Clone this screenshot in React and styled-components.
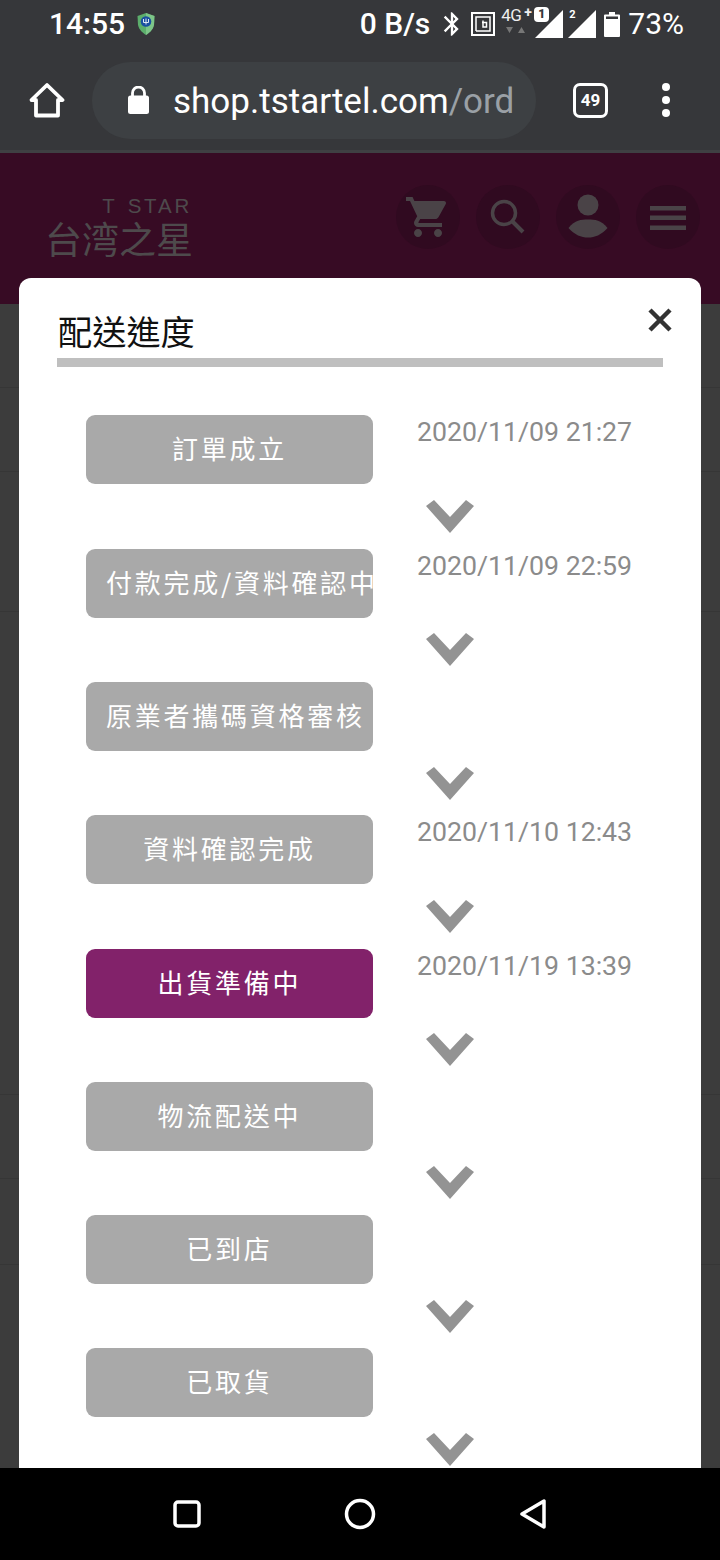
import React from "react";
import styled, { createGlobalStyle } from "styled-components";

const Global = createGlobalStyle`
  html, body { margin: 0; padding: 0; background: #000; }
  * { box-sizing: border-box; }
`;

const Phone = styled.div`
  position: relative;
  width: 720px;
  height: 1560px;
  overflow: hidden;
  display: flex;
  flex-direction: column;
  background: #3c3c3c;
  font-family: Roboto, "Noto Sans CJK TC", sans-serif;
`;

const Chrome = styled.div`
  height: 153px;
  flex: none;
  background: #36373a;
  border-bottom: 3px solid #3f4043;
  color: #fff;
`;

const StatusBar = styled.div`
  height: 50px;
  display: flex;
  align-items: center;
  padding: 0 36px 2px 49px;
  font-size: 30px;
  line-height: 1;
`;

const Clock = styled.span`
  font-weight: 500;
  margin-right: 11px;
`;

const Spacer = styled.div`
  flex: 1;
`;

const StatusIcons = styled.div`
  display: flex;
  align-items: center;
`;

const Speed = styled.span`
  font-weight: 500;
  margin-right: 8px;
  font-size: 30px;
`;

const Network = styled.div`
  position: relative;
  width: 34px;
  height: 36px;
  margin-left: 6px;
  font-size: 17px;
  font-weight: 400;
  color: #eee;
`;

const NetLabel = styled.span`
  position: absolute;
  left: 0;
  top: 1px;
  letter-spacing: -0.5px;
`;

const NetPlus = styled.span`
  position: absolute;
  left: 23px;
  top: -1px;
  font-size: 14px;
  font-weight: 700;
`;

const NetArrows = styled.svg`
  position: absolute;
  left: 5px;
  top: 21px;
`;

const Signal = styled.div`
  position: relative;
  width: 28px;
  height: 28px;
  margin-left: ${(p) => p.$gap}px;
`;

const SimBadge = styled.span`
  position: absolute;
  left: -1px;
  top: -3px;
  width: 15px;
  height: 15px;
  border-radius: 4px;
  background: #fff;
  color: #36373a;
  font-size: 12px;
  font-weight: 900;
  line-height: 15px;
  text-align: center;
  box-shadow: 0 0 0 1px #36373a;
`;

const SimLabel = styled.span`
  position: absolute;
  left: 1px;
  top: -1px;
  font-size: 11px;
  font-weight: 700;
  color: #fff;
`;

const Percent = styled.span`
  margin-left: 8px;
`;

const Toolbar = styled.div`
  height: 100px;
  display: flex;
  align-items: center;
  padding-left: 29px;
`;

const UrlPill = styled.div`
  width: 444px;
  height: 77px;
  margin-left: 27px;
  margin-right: 37px;
  border-radius: 39px;
  background: #3d4043;
  display: flex;
  align-items: center;
  padding: 0 20px 0 36px;
  overflow: hidden;
`;

const UrlText = styled.div`
  margin-left: 24px;
  padding-top: 4px;
  font-size: 35px;
  line-height: 40px;
  white-space: nowrap;
  overflow: hidden;
  color: #fff;
`;

const UrlPath = styled.span`
  color: #9aa0a6;
`;

const TabCount = styled.div`
  width: 35px;
  height: 35px;
  border: 3.5px solid #fff;
  border-radius: 7px;
  display: flex;
  align-items: center;
  justify-content: center;
  font-size: 17px;
  font-weight: 700;
  margin-right: 53px;
`;

const SiteHeader = styled.div`
  height: 151px;
  flex: none;
  background: #370b24;
  display: flex;
  padding: 41px 20px 0 45px;
`;

const Logo = styled.div`
  width: 147px;
  display: flex;
  flex-direction: column;
  color: #4e4a4c;
`;

const LogoLatin = styled.div`
  font-family: "Liberation Sans", sans-serif;
  font-size: 20.5px;
  line-height: 24px;
  letter-spacing: 2.8px;
  word-spacing: 2px;
  text-align: right;
  white-space: pre;
`;

const LogoCjk = styled.div`
  font-family: "Noto Sans CJK SC", sans-serif;
  font-size: 37px;
  line-height: 41px;
  white-space: nowrap;
`;

const HeaderActions = styled.div`
  margin-left: auto;
  margin-top: -9px;
  display: flex;
  gap: 16px;
  height: 64px;
`;

const RoundAction = styled.div`
  width: 64px;
  height: 64px;
  border-radius: 50%;
  background: #300a20;
  display: flex;
  align-items: center;
  justify-content: center;
`;

const Backdrop = styled.div`
  flex: 1;
  display: flex;
  flex-direction: column;
`;

const BackdropRow = styled.div`
  height: ${(p) => p.$h}px;
  flex: none;
  border-bottom: 1px solid #363636;
`;

const NavBar = styled.div`
  position: relative;
  z-index: 3;
  height: 92px;
  flex: none;
  background: #000;
  display: flex;
  align-items: center;
  justify-content: center;
  gap: 143px;
  padding-bottom: 1px;
`;

const Modal = styled.div`
  position: absolute;
  z-index: 2;
  left: 19px;
  top: 278px;
  width: 682px;
  height: 1190px;
  background: #fff;
  border-radius: 12px 12px 0 0;
  overflow: hidden;
  padding: 33px 38px 0;
`;

const CloseButton = styled.svg`
  position: absolute;
  right: 29px;
  top: 30px;
`;

const Title = styled.h2`
  margin: 0 0 0 1px;
  height: 47px;
  font-family: "Noto Sans CJK TC", sans-serif;
  font-weight: 400;
  font-size: 34.2px;
  line-height: 38px;
  color: #111;
`;

const TitleRule = styled.div`
  height: 9px;
  background: #bfbfbf;
  margin-bottom: 48.2px;
`;

const Steps = styled.div`
  display: flex;
  flex-direction: column;
  padding-left: 29px;
`;

const StepRow = styled.div`
  display: flex;
  height: 69px;
`;

const StepButton = styled.div`
  width: 287px;
  height: 69px;
  flex: none;
  border-radius: 9px;
  background: ${(p) => (p.$active ? "#82226a" : "#a9a9a9")};
  color: #fff;
  font-family: "Noto Sans CJK TC", sans-serif;
  font-size: 26px;
  letter-spacing: 2.75px;
  line-height: 66px;
  padding: 0 20px;
  text-align: center;
  white-space: nowrap;
  overflow: hidden;
`;

const StepDate = styled.div`
  margin-left: 44px;
  font-size: 26.7px;
  line-height: 34px;
  color: #8b8b8b;
  white-space: nowrap;
`;

const Arrow = styled.div`
  height: 64.33px;
  display: flex;
  align-items: center;
  padding-left: 340px;
`;

const steps = [
  ["訂單成立", "2020/11/09 21:27"],
  ["付款完成/資料確認中", "2020/11/09 22:59"],
  ["原業者攜碼資格審核", ""],
  ["資料確認完成", "2020/11/10 12:43"],
  ["出貨準備中", "2020/11/19 13:39", true],
  ["物流配送中", ""],
  ["已到店", ""],
  ["已取貨", ""],
];

const backdropRows = [84, 84, 140, 483, 84, 86];

const Shield = () => (
  <svg width="20" height="24" viewBox="0 0 20 24" style={{ display: "block" }}>
    <path d="M10 1 18.500 4 18 13C17 18 13 21 10 23 7 21 3 18 2 13L1.500 4Z" fill="#5cae6c" />
    <path d="M10 1 18.500 4 18 13C17 18 13 21 10 23Z" fill="#8ccf94" opacity=".7" />
    <circle cx="10" cy="9.500" r="5.300" fill="#1a4fa0" />
    <path d="M7.500 7v3.500h5V7M10 6.500v6" stroke="#dfe9f5" strokeWidth="1" fill="none" />
  </svg>
);

const Bluetooth = () => (
  <svg width="28" height="28" viewBox="0 0 24 24" fill="#fff" style={{ display: "block" }}>
    <path d="M17.710 7.710 12 2h-1v7.590L6.410 5 5 6.410 10.590 12 5 17.590 6.410 19 11 14.410V22h1l5.710-5.710-4.300-4.290 4.300-4.290zM13 5.830l1.880 1.880L13 9.590V5.830zm1.880 10.460L13 18.170v-3.760l1.880 1.880z" />
  </svg>
);

const Nfc = () => (
  <svg width="24" height="24" viewBox="0 0 24 24" fill="none" stroke="#fff" style={{ display: "block", marginLeft: 5 }}>
    <rect x="1" y="1" width="22" height="22" strokeWidth="2" />
    <path d="M5 19V5h14v14H5" strokeWidth="1.500" />
    <path d="M12 8.500v6.500h3.500V10.500H11" strokeWidth="1.500" />
  </svg>
);

const SignalShape = () => (
  <svg width="28" height="28" viewBox="0 0 28 28" style={{ display: "block" }}>
    <path d="M28 0V28H0Z" fill="#fff" />
  </svg>
);

const Battery = () => (
  <svg width="16" height="25" viewBox="0 0 16 25" style={{ display: "block", marginLeft: 8 }}>
    <path d="M5 0h6v2.500h4a1 1 0 0 1 1 1V24a1 1 0 0 1-1 1H1a1 1 0 0 1-1-1V3.500a1 1 0 0 1 1-1h4Z" fill="#fff" />
    <rect x="2" y="4.500" width="12" height="2.500" fill="#36373a" />
  </svg>
);

const Home = () => (
  <svg width="36" height="36" viewBox="0 0 36 36" fill="none" stroke="#fff" strokeWidth="3.800" strokeLinejoin="round" strokeLinecap="round" style={{ display: "block", flex: "none" }}>
    <path d="M2.500 18 18 3l15.500 15H29v15.500H7V18Z" />
  </svg>
);

const Lock = () => (
  <svg width="21" height="28" viewBox="0 0 21 28" style={{ display: "block", flex: "none" }}>
    <path d="M4.500 10V7a6 6 0 0 1 12 0v3" fill="none" stroke="#fff" strokeWidth="2.800" />
    <rect x="0" y="9.500" width="21" height="18.500" rx="2.500" fill="#fff" />
  </svg>
);

const Dots = () => (
  <svg width="10" height="36" viewBox="0 0 10 36" fill="#fff" style={{ display: "block" }}>
    <circle cx="5" cy="5" r="4" />
    <circle cx="5" cy="18" r="4" />
    <circle cx="5" cy="31" r="4" />
  </svg>
);

const icon = "#4a4347";

const Cart = () => (
  <svg width="48" height="48" viewBox="0 0 24 24" fill={icon}>
    <path d="M7 18c-1.100 0-1.990.9-1.990 2S5.900 22 7 22s2-.9 2-2-.9-2-2-2zM1 2v2h2l3.600 7.590-1.350 2.450c-.16.28-.25.61-.25.96 0 1.100.9 2 2 2h12v-2H7.420c-.14 0-.25-.11-.25-.25l.03-.12.9-1.630h7.450c.75 0 1.410-.41 1.750-1.030l3.580-6.490c.08-.14.12-.31.12-.48 0-.55-.45-1-1-1H5.210l-.94-2H1zm16 16c-1.100 0-1.990.9-1.990 2s.89 2 1.990 2 2-.9 2-2-.9-2-2-2z" />
  </svg>
);

const Search = () => (
  <svg width="44" height="44" viewBox="0 0 44 44" fill="none" stroke={icon} style={{ marginTop: 1 }}>
    <circle cx="18" cy="17" r="11.500" strokeWidth="3.500" />
    <path d="m26 25 11 11" strokeWidth="4" />
  </svg>
);

const Person = () => (
  <svg width="44" height="48" viewBox="0 0 44 48" fill={icon}>
    <circle cx="22" cy="12" r="10.500" />
    <path d="M2.500 35C9 27 15 26.500 22 26.500S35 27 41.500 35C35 42 29 44.500 22 44.500S9 42 2.500 35Z" />
  </svg>
);

const Burger = () => (
  <svg width="36" height="24" viewBox="0 0 36 24" fill={icon} style={{ marginTop: 2 }}>
    <rect width="36" height="4.500" />
    <rect y="9.500" width="36" height="4.500" />
    <rect y="19.500" width="36" height="4.500" />
  </svg>
);

const Chevron = () => (
  <svg width="48" height="33" viewBox="0 0 48 33" fill="#939393">
    <path d="M0 6 8 0 24 17 40 0 48 6 24 33Z" />
  </svg>
);

export default function App() {
  return (
    <Phone>
      <Global />
      <Chrome>
        <StatusBar>
          <Clock>14:55</Clock>
          <Shield />
          <Spacer />
          <StatusIcons>
            <Speed>0 B/s</Speed>
            <Bluetooth />
            <Nfc />
            <Network>
              <NetLabel>4G</NetLabel>
              <NetPlus>+</NetPlus>
              <NetArrows width="20" height="7" viewBox="0 0 20 7" fill="#777">
                <path d="M0 0h7L3.500 6ZM12 6h7L15.500 0Z" />
              </NetArrows>
            </Network>
            <Signal $gap={0}>
              <SignalShape />
              <SimBadge>1</SimBadge>
            </Signal>
            <Signal $gap={5}>
              <SignalShape />
              <SimLabel>2</SimLabel>
            </Signal>
            <Battery />
            <Percent>73%</Percent>
          </StatusIcons>
        </StatusBar>
        <Toolbar>
          <Home />
          <UrlPill>
            <Lock />
            <UrlText>
              shop.tstartel.com<UrlPath>/ord</UrlPath>
            </UrlText>
          </UrlPill>
          <TabCount>49</TabCount>
          <Dots />
        </Toolbar>
      </Chrome>
      <SiteHeader>
        <Logo>
          <LogoLatin>T STAR</LogoLatin>
          <LogoCjk>台湾之星</LogoCjk>
        </Logo>
        <HeaderActions>
          <RoundAction><Cart /></RoundAction>
          <RoundAction><Search /></RoundAction>
          <RoundAction><Person /></RoundAction>
          <RoundAction><Burger /></RoundAction>
        </HeaderActions>
      </SiteHeader>
      <Backdrop>
        {backdropRows.map((h, i) => (
          <BackdropRow key={i} $h={h} />
        ))}
      </Backdrop>
      <NavBar>
        <svg width="28" height="28" viewBox="0 0 28 28" fill="none" stroke="#fff" strokeWidth="3.500">
          <rect x="2" y="2" width="24" height="24" rx="3" />
        </svg>
        <svg width="32" height="32" viewBox="0 0 32 32" fill="none" stroke="#fff" strokeWidth="3.500">
          <circle cx="16" cy="16" r="13.500" />
        </svg>
        <svg width="28" height="30" viewBox="0 0 28 30" fill="none" stroke="#fff" strokeWidth="3.500" strokeLinejoin="round">
          <path d="M25 2V28L3 15Z" />
        </svg>
      </NavBar>
      <Modal>
        <CloseButton width="24" height="24" viewBox="0 0 24 24" stroke="#333" strokeWidth="4.500" fill="none">
          <path d="M2 2 22 22M22 2 2 22" />
        </CloseButton>
        <Title>配送進度</Title>
        <TitleRule />
        <Steps>
          {steps.map(([label, date, active]) => (
            <React.Fragment key={label}>
              <StepRow>
                <StepButton $active={active}>{label}</StepButton>
                {date && <StepDate>{date}</StepDate>}
              </StepRow>
              <Arrow>
                <Chevron />
              </Arrow>
            </React.Fragment>
          ))}
        </Steps>
      </Modal>
    </Phone>
  );
}
